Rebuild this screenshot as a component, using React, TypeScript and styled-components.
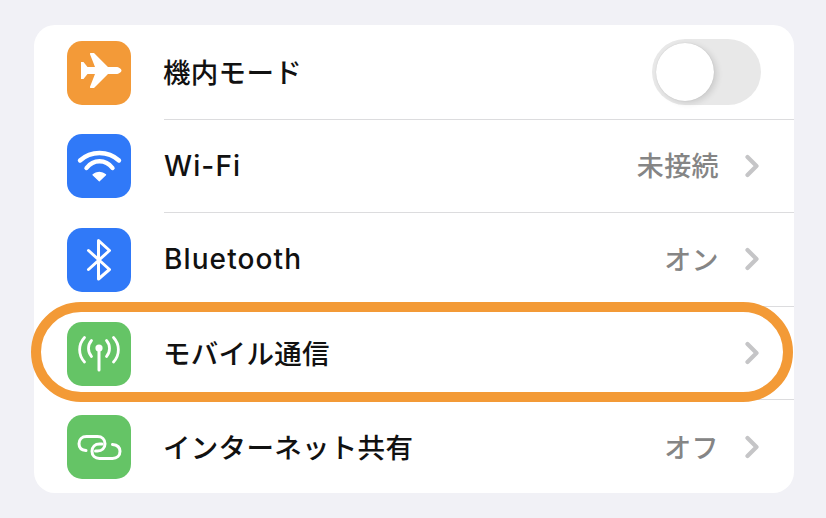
import React from "react";
import styled, { createGlobalStyle } from "styled-components";

const GlobalStyle = createGlobalStyle`
  html, body {
    margin: 0;
    padding: 0;
    background: #f1f1f6;
  }
`;

const Page = styled.div`
  width: 826px;
  height: 518px;
  padding: 25px 32px 25px 34px;
  box-sizing: border-box;
  overflow: hidden;
  position: relative;
  font-family: "Inter", "Noto Sans CJK JP", sans-serif;
`;

const Card = styled.div`
  background: #fff;
  border-radius: 21px;
  height: 468px;
  padding-top: 1px;
  box-sizing: border-box;
  display: flex;
  flex-direction: column;
`;

const Row = styled.div`
  height: 93.6px;
  flex-shrink: 0;
  display: flex;
  align-items: center;
  padding-left: 33px;
`;

const IconBox = styled.div<{ $color: string }>`
  width: 64px;
  height: 64px;
  border-radius: 15px;
  background: ${({ $color }) => $color};
  display: flex;
  align-items: center;
  justify-content: center;
  flex-shrink: 0;
`;

const RowBody = styled.div<{ $divider: boolean }>`
  flex: 1;
  align-self: stretch;
  margin-left: 33px;
  padding-right: 34px;
  display: flex;
  align-items: center;
  justify-content: space-between;
  border-bottom: ${({ $divider }) => ($divider ? "1px solid #dcdcde" : "none")};
`;

const Label = styled.span<{ $latin?: boolean }>`
  font-size: ${({ $latin }) => ($latin ? "28px" : "27.5px")};
  letter-spacing: ${({ $latin }) => ($latin ? "1.1px" : "0.3px")};
  padding-bottom: ${({ $latin }) => ($latin ? "0" : "3px")};
  margin-left: ${({ $latin }) => ($latin ? "0" : "-1px")};
  font-weight: 500;
  color: #111;
`;

const Detail = styled.div`
  display: flex;
  align-items: center;
  gap: 26px;
`;

const Value = styled.span`
  font-size: 27px;
  letter-spacing: 0.4px;
  padding-bottom: 2px;
  font-weight: 500;
  color: #858585;
`;

const Toggle = styled.div`
  width: 109px;
  height: 66px;
  margin-right: -1px;
  border-radius: 33px;
  background: #e8e8e8;
  padding: 4px;
  box-sizing: border-box;
`;

const Knob = styled.div`
  width: 58px;
  height: 58px;
  border-radius: 50%;
  background: #fff;
  box-shadow: 0 0 1px rgba(0, 0, 0, 0.18), 3px 2px 6px rgba(0, 0, 0, 0.12);
`;

const Highlight = styled.div`
  position: absolute;
  left: 31px;
  top: 302px;
  width: 762px;
  height: 100px;
  box-sizing: border-box;
  border: 10px solid #f39a36;
  border-radius: 50px;
`;

const Chevron = () => (
  <svg width="15" height="24" viewBox="0 0 15 24" fill="none">
    <path d="M2.5 3 L11.5 12 L2.5 21" stroke="#c5c5c7" strokeWidth="4.2" strokeLinecap="round" strokeLinejoin="round" />
  </svg>
);

const PlaneIcon = () => (
  <svg width="64" height="64" viewBox="0 0 64 64">
    <path
      d="M14 21 L16.5 21 L20.5 26 L28 26 L23 13.2 C22.8 12.4 23.2 12 24 12 L27 12 L41 26 L49 26 C52 26 54.5 28 54.5 29.5 C54.5 31 52 33 49 33 L41 33 L27 47 L24 47 C23.2 47 22.8 46.6 23 45.8 L28 33 L20.5 33 L16.5 38 L14 38 Z"
      fill="#fff"
    />
  </svg>
);

const WifiIcon = () => (
  <svg width="64" height="64" viewBox="0 0 64 64" fill="none">
    <path d="M13 26.5 C24 16.5 41 16.5 52 26.5" stroke="#fff" strokeWidth="4.4" strokeLinecap="round" />
    <path d="M19.5 34 C26.5 25 38.5 25 45.5 34" stroke="#fff" strokeWidth="4.4" strokeLinecap="round" />
    <path d="M32.3 46.8 L26 40.8 C29.5 37.6 35 37.6 38.6 40.8 Z" fill="#fff" stroke="#fff" strokeWidth="1.2" strokeLinejoin="round" />
  </svg>
);

const BluetoothIcon = () => (
  <svg width="64" height="64" viewBox="0 0 64 64" fill="none">
    <path d="M21.5 22.5 L42.5 41.5 L31.5 51 L31.5 12.5 L42.5 22.5 L21.5 41.5" stroke="#fff" strokeWidth="3" strokeLinecap="round" strokeLinejoin="round" />
  </svg>
);

const AntennaIcon = () => (
  <svg width="64" height="64" viewBox="0 0 64 64" fill="none">
    <circle cx="32" cy="26" r="3.6" fill="#fff" />
    <path d="M32 27 L32 48" stroke="#fff" strokeWidth="3" strokeLinecap="round" />
    <path d="M24.5 18.5 C20.5 23 20.5 30 24.5 34.5" stroke="#fff" strokeWidth="2.8" strokeLinecap="round" />
    <path d="M39.5 18.5 C43.5 23 43.5 30 39.5 34.5" stroke="#fff" strokeWidth="2.8" strokeLinecap="round" />
    <path d="M17.5 15.5 C11 22.5 11 33 17.5 40" stroke="#fff" strokeWidth="2.8" strokeLinecap="round" />
    <path d="M46.5 15.5 C53 22.5 53 33 46.5 40" stroke="#fff" strokeWidth="2.8" strokeLinecap="round" />
  </svg>
);

const LinkIcon = () => (
  <svg width="64" height="64" viewBox="0 0 64 64" fill="none">
    <path d="M19 35.5 C14.5 35 12 32.5 12 28.7 C12 24.5 15 21.5 19.5 21.5 L30.5 21.5 C35 21.5 38 24.5 38 28.7 C38 33 35 36 30.5 36 L28.5 36" stroke="#fff" strokeWidth="3" strokeLinecap="round" />
    <path d="M45.5 29.5 C50.5 30 53 32.7 53 36.3 C53 40.5 50 43.5 45.5 43.5 L32.5 43.5 C28 43.5 25 40.5 25 36.3 C25 32 28 29 32.5 29 L35 29" stroke="#fff" strokeWidth="3" strokeLinecap="round" />
  </svg>
);

const BLUE = "#3079f8";
const GREEN = "#65c466";

const ROWS = [
  { label: "機内モード", color: "#f39a38", icon: <PlaneIcon />, toggle: true },
  { label: "Wi-Fi", latin: true, color: BLUE, icon: <WifiIcon />, value: "未接続" },
  { label: "Bluetooth", latin: true, color: BLUE, icon: <BluetoothIcon />, value: "オン" },
  { label: "モバイル通信", color: GREEN, icon: <AntennaIcon /> },
  { label: "インターネット共有", color: GREEN, icon: <LinkIcon />, value: "オフ" },
];

const App = () => (
  <Page>
    <GlobalStyle />
    <Card>
      {ROWS.map((row, index) => (
        <Row key={row.label}>
          <IconBox $color={row.color}>{row.icon}</IconBox>
          <RowBody $divider={index < ROWS.length - 1}>
            <Label $latin={row.latin}>{row.label}</Label>
            {row.toggle ? (
              <Toggle>
                <Knob />
              </Toggle>
            ) : (
              <Detail>
                {row.value && <Value>{row.value}</Value>}
                <Chevron />
              </Detail>
            )}
          </RowBody>
        </Row>
      ))}
    </Card>
    <Highlight />
  </Page>
);

export default App;
